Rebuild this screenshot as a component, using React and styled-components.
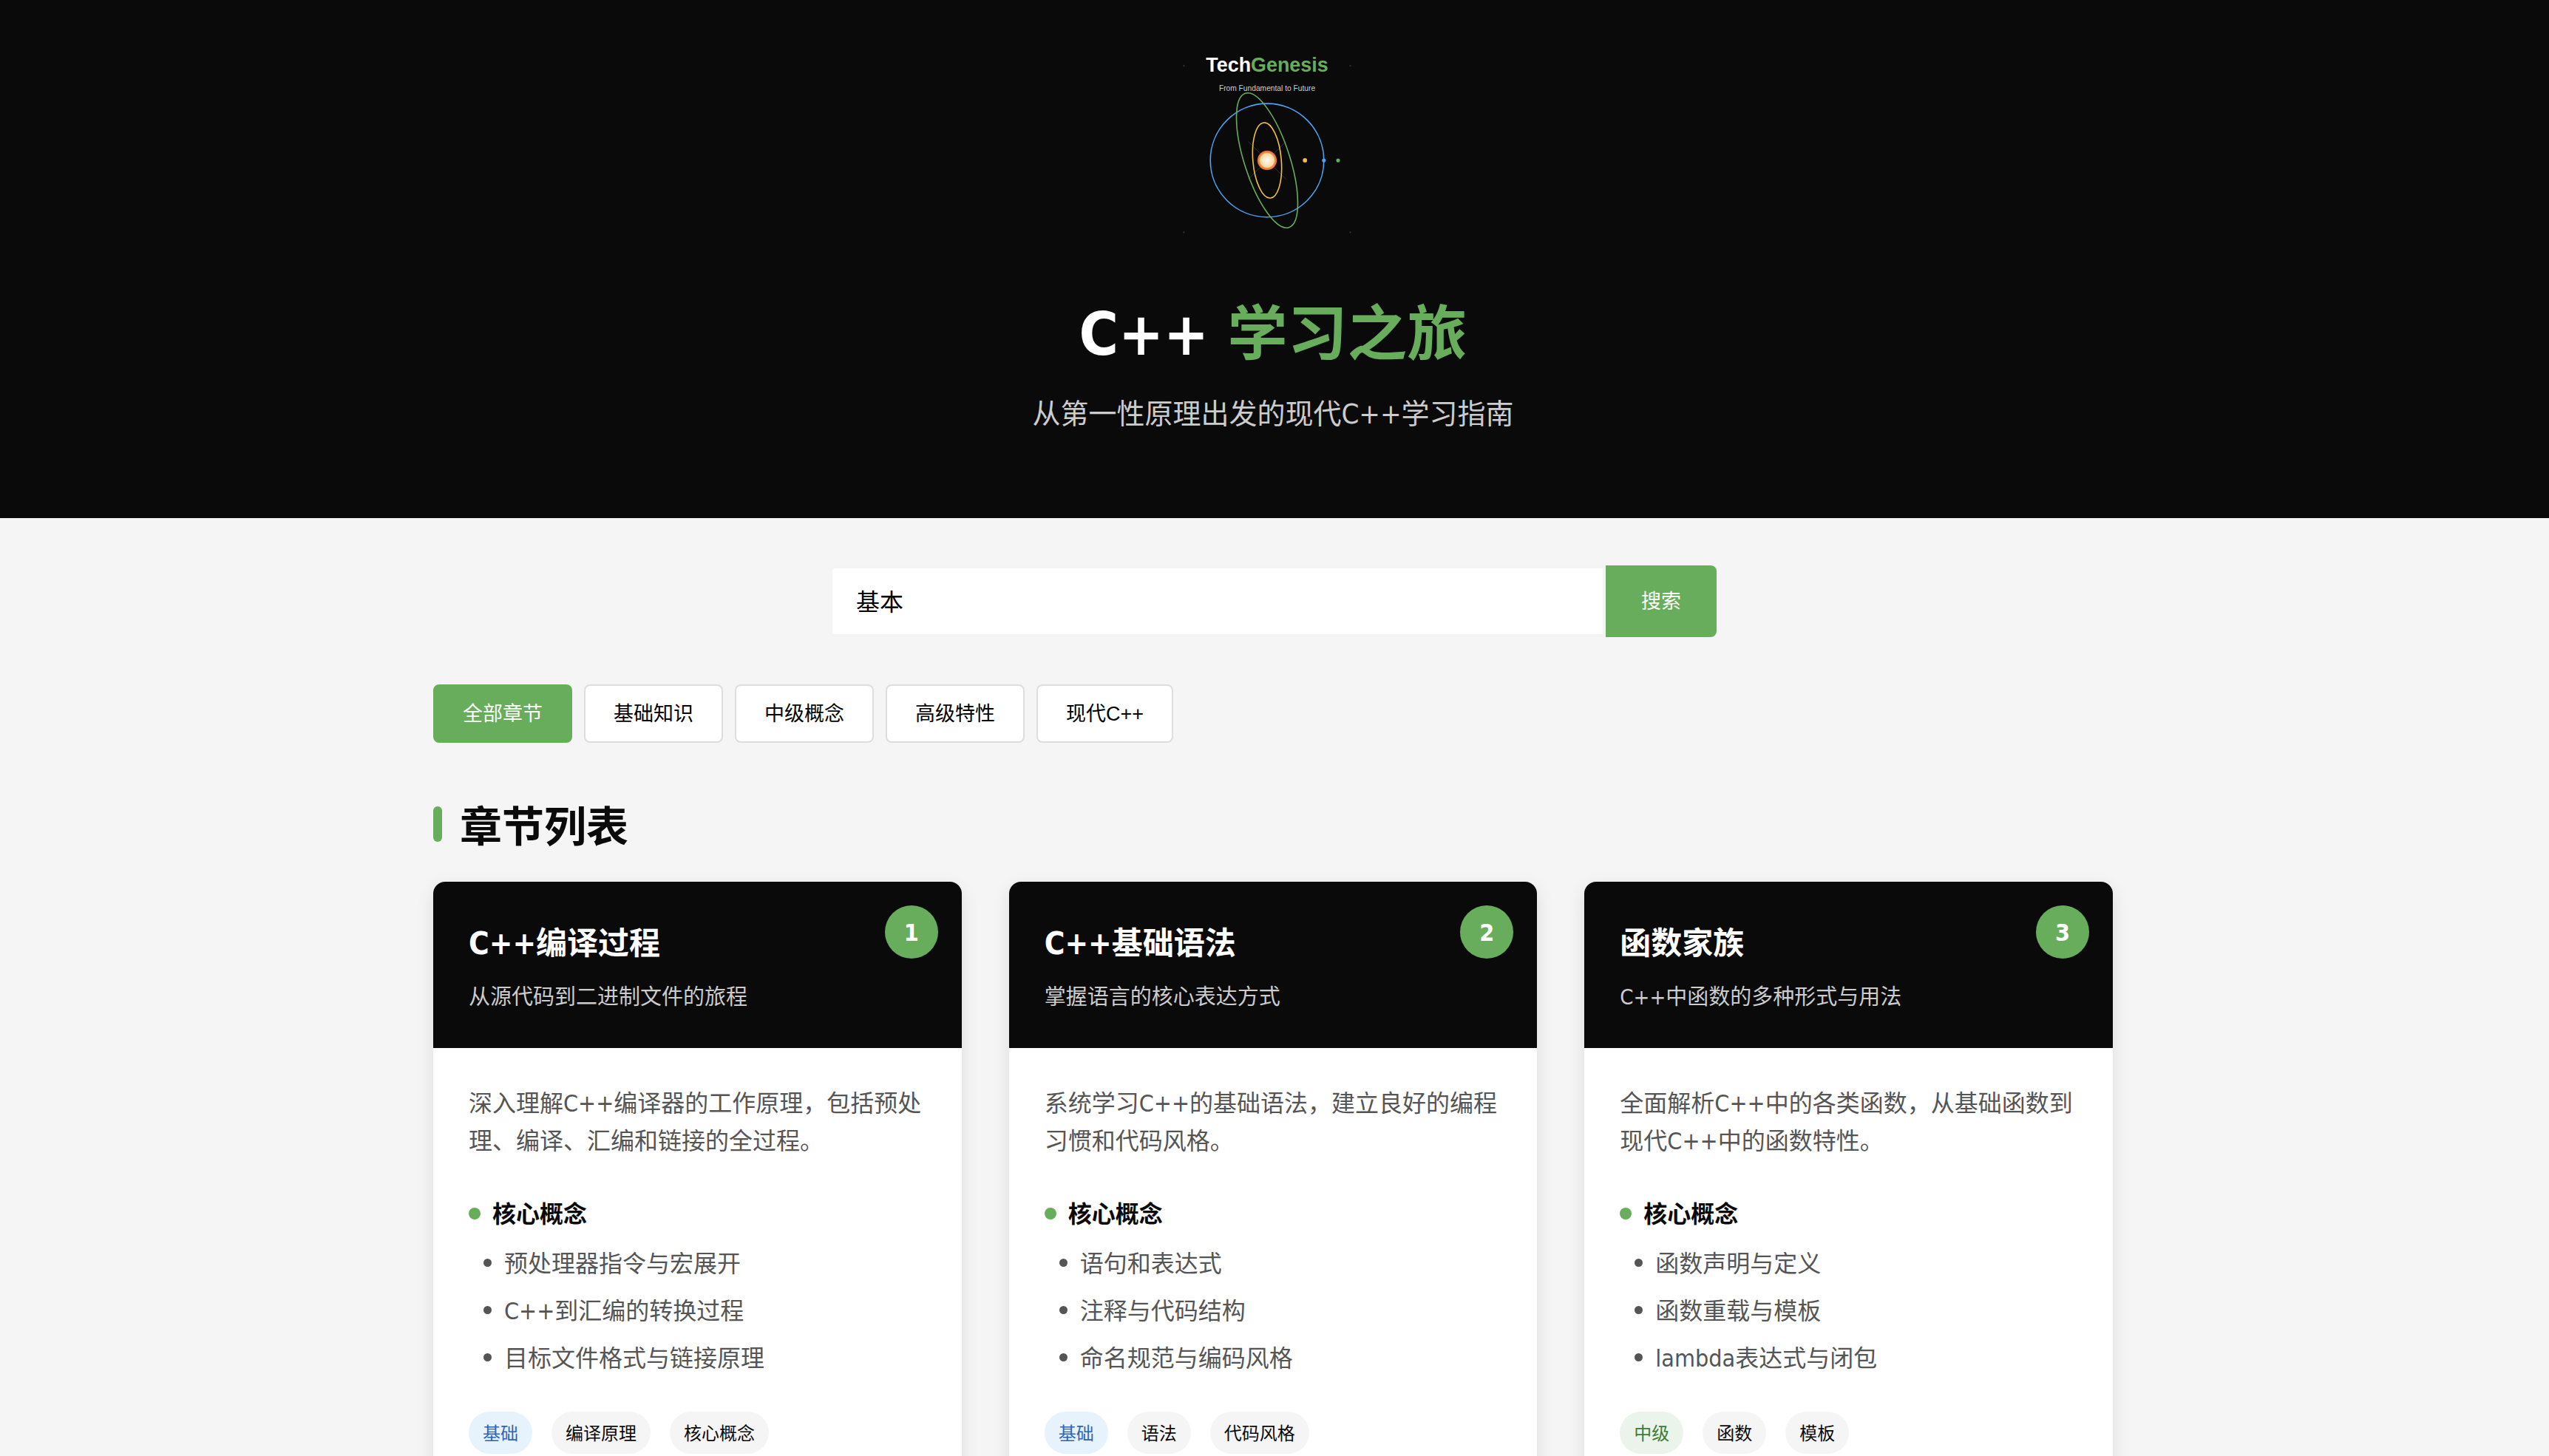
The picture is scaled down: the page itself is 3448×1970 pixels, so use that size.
import React, { useState } from "react";
import styled, { createGlobalStyle, css } from "styled-components";

const color = {
  ink: "#0a0a0a",
  page: "#f5f5f5",
  green: "#67ad5b",
  soft: "#cccccc",
  text: "#555555",
  line: "#dddddd",
};

const GlobalStyle = createGlobalStyle`
  * { box-sizing: border-box; margin: 0; padding: 0; }
  body {
    background: ${color.page};
    color: ${color.ink};
    font-family: "DejaVu Sans Condensed", "Noto Sans CJK SC", sans-serif;
    font-size: 32px;
    line-height: 51px;
    padding-right: 4px;
  }
`;

const Hero = styled.header`
  display: flex;
  flex-direction: column;
  align-items: center;
  margin-right: -4px;
  padding: 64px 68px 110px 64px;
  background: ${color.ink};
  text-align: center;
`;

const Logo = styled.svg`
  display: block;
  width: 256px;
  height: 256px;
  margin: 0 16px 68px 0;
`;

const HeroTitle = styled.h1`
  color: #ffffff;
  font-size: 81px;
  line-height: 128px;
  margin-bottom: 14px;
`;

const Accent = styled.span`
  color: ${color.green};
`;

const HeroText = styled.p`
  color: ${color.soft};
  font-size: 38px;
  line-height: 61px;
`;

const Main = styled.main`
  max-width: 2400px;
  margin: 0 auto;
  padding: 64px;
`;

const controlFont = css`
  font-family: "Liberation Sans", "Noto Sans CJK SC", sans-serif;
`;

const Search = styled.form`
  display: flex;
  max-width: 1200px;
  margin: 0 auto 64px;
`;

const SearchInput = styled.input`
  ${controlFont}
  flex: 1;
  min-width: 0;
  height: 97px;
  padding: 0 32px 4px;
  border: 4px solid #f4f4f4;
  border-radius: 8px 0 0 8px;
  background: #ffffff;
  color: #000000;
  font-size: 32px;
  outline: none;
`;

const SearchButton = styled.button`
  ${controlFont}
  padding: 0 48px 4px;
  border: 0;
  border-radius: 0 8px 8px 0;
  background: ${color.green};
  color: #ffffff;
  font-size: 27px;
  cursor: pointer;
`;

const Filters = styled.nav`
  display: flex;
  flex-wrap: wrap;
  gap: 16px;
  margin-bottom: 68px;
`;

const FilterButton = styled.button`
  ${controlFont}
  height: 79px;
  padding: 0 38px 4px;
  border: 2px solid ${(p) => (p.$active ? color.green : color.line)};
  border-radius: 8px;
  background: ${(p) => (p.$active ? color.green : "#ffffff")};
  color: ${(p) => (p.$active ? "#ffffff" : "#000000")};
  font-size: 27px;
  cursor: pointer;
`;

const SectionTitle = styled.h2`
  display: flex;
  align-items: center;
  gap: 24px;
  font-size: 57px;
  line-height: 92px;
  margin-bottom: 28px;

  &::before {
    content: "";
    width: 12px;
    height: 48px;
    margin-bottom: 8px;
    border-radius: 6px;
    background: ${color.green};
  }
`;

const Grid = styled.div`
  display: grid;
  grid-template-columns: repeat(3, 1fr);
  gap: 64px;
`;

const Card = styled.article`
  border-radius: 16px;
  overflow: hidden;
  background: #ffffff;
  box-shadow: 0 8px 24px rgba(0, 0, 0, 0.1);
`;

const CardHead = styled.div`
  position: relative;
  padding: 50px 48px 46px;
  background: ${color.ink};
`;

const CardTitle = styled.h3`
  color: #ffffff;
  font-size: 42px;
  line-height: 67px;
  margin-bottom: 16px;
`;

const CardSubtitle = styled.p`
  color: ${color.soft};
  font-size: 29px;
  line-height: 46px;
`;

const Badge = styled.span`
  position: absolute;
  top: 32px;
  right: 32px;
  display: grid;
  place-items: center;
  width: 72px;
  height: 72px;
  padding-top: 2px;
  border-radius: 50%;
  background: ${color.green};
  color: #ffffff;
  font-weight: bold;
`;

const CardBody = styled.div`
  padding: 50px 48px 48px;
`;

const Description = styled.p`
  color: ${color.text};
  margin-bottom: 48px;
`;

const ConceptTitle = styled.h4`
  display: flex;
  align-items: center;
  gap: 16px;
  font-size: 32px;
  margin-bottom: 16px;

  &::before {
    content: "";
    width: 16px;
    height: 16px;
    margin-bottom: 4px;
    border-radius: 50%;
    background: ${color.green};
  }
`;

const ConceptList = styled.ul`
  display: grid;
  gap: 13px;
  padding-left: 20px;
  margin-bottom: 46px;
  color: ${color.text};
  list-style: none;
`;

const Concept = styled.li`
  display: flex;
  align-items: center;
  gap: 17px;

  &::before {
    content: "";
    width: 11px;
    height: 11px;
    margin-bottom: 4px;
    border-radius: 50%;
    background: ${color.text};
  }
`;

const Tags = styled.div`
  display: flex;
  flex-wrap: wrap;
  gap: 26px;
`;

const tones = {
  basic: css`
    background: #e6f2fc;
    color: #2f64ba;
  `,
  middle: css`
    background: #eaf4ea;
    color: #407c39;
  `,
  plain: css`
    background: ${color.page};
    color: ${color.ink};
  `,
};

const Tag = styled.span`
  padding: 4px 19px 0;
  border-radius: 30px;
  font-size: 24px;
  line-height: 53px;
  ${(p) => tones[p.$tone]}
`;

const filters = ["全部章节", "基础知识", "中级概念", "高级特性", "现代C++"];

const chapters = [
  {
    title: "C++编译过程",
    subtitle: "从源代码到二进制文件的旅程",
    text: "深入理解C++编译器的工作原理，包括预处理、编译、汇编和链接的全过程。",
    concepts: ["预处理器指令与宏展开", "C++到汇编的转换过程", "目标文件格式与链接原理"],
    tone: "basic",
    level: "基础",
    tags: ["编译原理", "核心概念"],
  },
  {
    title: "C++基础语法",
    subtitle: "掌握语言的核心表达方式",
    text: "系统学习C++的基础语法，建立良好的编程习惯和代码风格。",
    concepts: ["语句和表达式", "注释与代码结构", "命名规范与编码风格"],
    tone: "basic",
    level: "基础",
    tags: ["语法", "代码风格"],
  },
  {
    title: "函数家族",
    subtitle: "C++中函数的多种形式与用法",
    text: "全面解析C++中的各类函数，从基础函数到现代C++中的函数特性。",
    concepts: ["函数声明与定义", "函数重载与模板", "lambda表达式与闭包"],
    tone: "middle",
    level: "中级",
    tags: ["函数", "模板"],
  },
];

const stars = [
  [-176, -200],
  [176, -200],
  [-176, 152],
  [176, 152],
];

function TechGenesisLogo() {
  return (
    <Logo viewBox="-200 -239 400 400" role="img" aria-label="TechGenesis">
      <defs>
        <radialGradient id="halo">
          <stop offset="0" stopColor="#f7c36b" />
          <stop offset="0.75" stopColor="#f19a4a" />
          <stop offset="1" stopColor="#ea6532" />
        </radialGradient>
        <radialGradient id="core">
          <stop offset="0" stopColor="#fffdf8" />
          <stop offset="1" stopColor="#f7d69a" />
        </radialGradient>
      </defs>
      {stars.map(([x, y]) => (
        <path key={`${x},${y}`} d={`M${x - 2} ${y}h4M${x} ${y - 2}v4`} stroke="#444444" strokeWidth="1" />
      ))}
      <g stroke="#444444" strokeWidth="1">
        <path d="M-40-40L40 40M40-40L-40 40" />
      </g>
      <g fill="none" strokeWidth="2.5">
        <ellipse rx="30" ry="80" transform="rotate(-5)" stroke="#f5bf41" />
        <circle r="120" stroke="#4ea2ef" />
        <ellipse rx="48" ry="149" transform="rotate(-18)" stroke={color.green} />
      </g>
      <circle r="20.5" fill="url(#halo)" />
      <circle r="15.5" fill="url(#core)" />
      <circle cx="80" r="4.5" fill="#f5bf41" />
      <circle cx="120" r="4" fill="#4ea2ef" />
      <circle cx="150" r="4" fill={color.green} />
      <g fontFamily="'Liberation Sans', sans-serif" textAnchor="middle">
        <text y="-187" fontSize="42" fontWeight="bold" fill="#ffffff">
          Tech<tspan fill={color.green}>Genesis</tspan>
        </text>
        <text y="-147" fontSize="16" fill="#cccccc">
          From Fundamental to Future
        </text>
      </g>
    </Logo>
  );
}

function ChapterCard({ chapter, number }) {
  return (
    <Card>
      <CardHead>
        <CardTitle>{chapter.title}</CardTitle>
        <CardSubtitle>{chapter.subtitle}</CardSubtitle>
        <Badge>{number}</Badge>
      </CardHead>
      <CardBody>
        <Description>{chapter.text}</Description>
        <ConceptTitle>核心概念</ConceptTitle>
        <ConceptList>
          {chapter.concepts.map((c) => (
            <Concept key={c}>{c}</Concept>
          ))}
        </ConceptList>
        <Tags>
          <Tag $tone={chapter.tone}>{chapter.level}</Tag>
          {chapter.tags.map((t) => (
            <Tag key={t} $tone="plain">{t}</Tag>
          ))}
        </Tags>
      </CardBody>
    </Card>
  );
}

export default function App() {
  const [query, setQuery] = useState("基本");
  const [active, setActive] = useState(filters[0]);

  return (
    <>
      <GlobalStyle />
      <Hero>
        <TechGenesisLogo />
        <HeroTitle>
          C++ <Accent>学习之旅</Accent>
        </HeroTitle>
        <HeroText>从第一性原理出发的现代C++学习指南</HeroText>
      </Hero>
      <Main>
        <Search onSubmit={(e) => e.preventDefault()}>
          <SearchInput
            type="text"
            aria-label="搜索章节"
            value={query}
            onChange={(e) => setQuery(e.target.value)}
          />
          <SearchButton type="submit">搜索</SearchButton>
        </Search>
        <Filters>
          {filters.map((f) => (
            <FilterButton key={f} type="button" $active={f === active} onClick={() => setActive(f)}>
              {f}
            </FilterButton>
          ))}
        </Filters>
        <SectionTitle>章节列表</SectionTitle>
        <Grid>
          {chapters.map((chapter, i) => (
            <ChapterCard key={chapter.title} chapter={chapter} number={i + 1} />
          ))}
        </Grid>
      </Main>
    </>
  );
}
